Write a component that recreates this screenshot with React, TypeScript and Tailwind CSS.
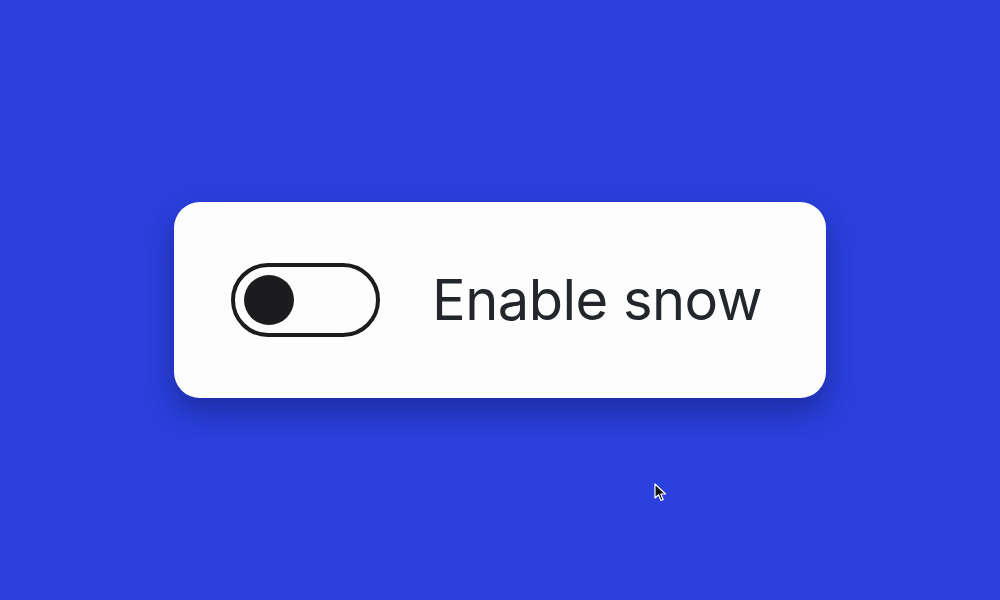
import { useState } from "react";

export default function App() {
  const [snow, setSnow] = useState(false);

  return (
    <main className="relative min-h-screen w-full bg-[#2b40dd] flex items-center justify-center font-['Inter',sans-serif]">
      <div className="w-[652px] h-[196px] bg-[#fcfdfc] rounded-[26px] shadow-[0_14px_30px_rgba(10,20,90,0.45)] flex items-center pl-[57px]">
        <button
          onClick={() => setSnow(!snow)}
          className="w-[149px] h-[74px] rounded-full border-4 border-[#1c1c1e] flex items-center px-[9px] shrink-0"
        >
          <span
            className={
              snow
                ? "block w-[50px] h-[50px] rounded-full bg-[#1c1c1e] ml-auto"
                : "block w-[50px] h-[50px] rounded-full bg-[#1c1c1e]"
            }
          />
        </button>
        <span className="ml-[52px] text-[56px] leading-none text-[#23262b] tracking-[-0.5px]">
          Enable snow
        </span>
      </div>

      {/* mouse pointer */}
      <svg
        className="absolute left-[654px] top-[483px]"
        width="14"
        height="20"
        viewBox="0 0 14 20"
      >
        <path
          d="M1 1 L1 15 L4.5 11.8 L7 17.5 L9.2 16.5 L6.8 11 L11.5 11 Z"
          fill="#111"
          stroke="#fff"
          strokeWidth="1.2"
          strokeLinejoin="round"
        />
      </svg>
    </main>
  );
}
